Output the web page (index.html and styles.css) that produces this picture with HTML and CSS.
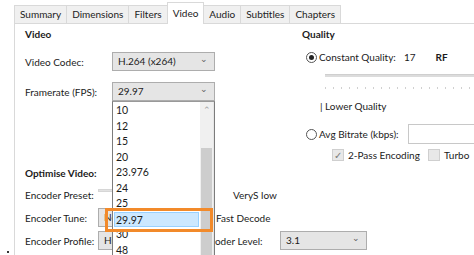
FILE: index.html
```html
<!DOCTYPE html>
<html>
    <head>
        <meta charset="utf-8" />
        <title>Video</title>
        <link rel="stylesheet" href="styles.css">
    </head>
    <body>
        <div class="tabs">
            <div class="tab">Summary</div>
            <div class="tab">Dimensions</div>
            <div class="tab">Filters</div>
            <div class="tab active">Video</div>
            <div class="tab">Audio</div>
            <div class="tab">Subtitles</div>
            <div class="tab">Chapters</div>
        </div>

        <div class="panel">
            <div class="leftcol">
                <div class="head">Video</div>
                <div class="row r-codec">
                    <span class="lbl">Video Codec:</span>
                    <div class="sel wide">H.264 (x264)<span class="arr">&#8964;</span></div>
                </div>
                <div class="row r-fps">
                    <span class="lbl">Framerate (FPS):</span>
                    <div class="sel wide">29.97<span class="arr">&#8964;</span></div>
                </div>

                <div class="head h-opt">Optimise Video:</div>
                <div class="row r-enc">
                    <span class="lbl2">Encoder Preset:</span>
                    <div class="pslider"></div>
                    <span class="preset">VeryS low</span>
                </div>
                <div class="row r-enc">
                    <span class="lbl2">Encoder Tune:</span>
                    <div class="sel mid">None<span class="arr">&#8964;</span></div>
                    <span class="fast">Fast Decode</span>
                </div>
                <div class="row r-enc">
                    <span class="lbl2">Encoder Profile:</span>
                    <div class="sel mid">High<span class="arr">&#8964;</span></div>
                    <span class="lvl">Encoder Level:</span>
                    <div class="sel lvlsel">3.1<span class="arr">&#8964;</span></div>
                </div>
            </div>

            <div class="rightcol">
                <div class="head">Quality</div>
                <div class="row r-cq">
                    <span class="radio on"></span>
                    <span class="cq">Constant Quality:</span>
                    <span class="num">17</span>
                    <span class="rf">RF</span>
                </div>
                <div class="track"></div>
                <div class="ticks"></div>
                <div class="lower">| Lower Quality</div>
                <div class="row r-ab">
                    <span class="radio"></span>
                    <span class="ab">Avg Bitrate (kbps):</span>
                    <div class="txt"></div>
                </div>
                <div class="row r-chk">
                    <span class="chk on">&#10003;</span>
                    <span class="chklbl">2-Pass Encoding</span>
                    <span class="chk"></span>
                    <span>Turbo</span>
                </div>
            </div>

            <div class="droplist">
                <div class="items">
                    <div class="item">10</div>
                    <div class="item">12</div>
                    <div class="item">15</div>
                    <div class="item">20</div>
                    <div class="item">23.976</div>
                    <div class="item">24</div>
                    <div class="item">25</div>
                    <div class="item picked">29.97</div>
                    <div class="item">30</div>
                    <div class="item">48</div>
                </div>
                <div class="scroll">
                    <span class="up">&#8963;</span>
                    <div class="thumb"></div>
                </div>
            </div>
            <div class="callout"></div>
        </div>
        <div class="mark"></div>
    </body>
</html>
```

FILE: styles.css
```css
*
{
    box-sizing: border-box;
}

body
{
    font: 10px Lato, "Noto Sans", sans-serif;
    color: #1b1b1b;
    background: #ffffff;
    margin: 0;
    width: 474px;
    height: 255px;
    overflow: hidden;
    position: relative;
}

/* tab strip */
.tabs
{
    display: flex;
    align-items: flex-end;
    height: 23px;
    padding-left: 14px;
}
.tab
{
    height: 18px;
    line-height: 16px;
    padding: 0 5px;
    background: #f0f0f0;
    border: 1px solid #d9d9d9;
    border-bottom: none;
    margin-right: -1px;
    color: #222;
}
.tab.active
{
    line-height: 20px;
    background: #ffffff;
    position: relative;
    z-index: 1;
    padding: 0 5px;
    margin-bottom: -1px;
    height: 22px;
}

.panel
{
    position: relative;
    margin-left: 14px;
    border-top: 1px solid #d9d9d9;
    border-left: 1px solid #d9d9d9;
    height: 232px;
    display: flex;
    padding-left: 10px;
}

.leftcol
{
    width: 277px;
    flex-shrink: 0;
    display: flex;
    flex-direction: column;
}
.rightcol
{
    flex: 1;
    display: flex;
    flex-direction: column;
}

.head
{
    font-weight: bold;
    line-height: 14px;
    margin-top: 3px;
}
.h-opt
{
    margin-top: 65px;
}

.row
{
    display: flex;
    align-items: center;
    white-space: nowrap;
}
.row > *
{
    flex-shrink: 0;
}
.r-codec
{
    margin-top: 11px;
    height: 19px;
}
.r-fps
{
    margin-top: 11px;
    height: 19px;
}
.r-enc
{
    margin-top: 4px;
    height: 19px;
}
.r-enc:nth-child(5)
{
    margin-top: 5px;
}

.lbl
{
    width: 87px;
}
.lbl2
{
    width: 73px;
}

.sel
{
    position: relative;
    height: 19px;
    line-height: 17px;
    padding-left: 5px;
    background: #e5e5e5;
    border: 1px solid #adadad;
}
.sel .arr
{
    position: absolute;
    right: 6px;
    top: -3px;
    font-size: 9px;
    color: #606060;
}
.wide
{
    width: 103px;
}
.mid
{
    width: 107px;
}
.lvl
{
    width: 81px;
    margin-left: -6px;
}
.lvlsel
{
    width: 87px;
}

.pslider
{
    width: 110px;
    height: 3px;
    background: #e2e2e2;
    border: 1px solid #d6d6d6;
    margin-top: -8px;
}
.preset
{
    margin-left: 25px;
}
.fast
{
    margin-left: 11px;
}

/* right column */
.r-cq
{
    margin-top: 9px;
    height: 14px;
}
.radio
{
    width: 11px;
    height: 11px;
    border: 1px solid #555;
    border-radius: 50%;
    margin: 0 2px 0 4px;
    position: relative;
    background: #fff;
}
.radio.on::after
{
    content: "";
    position: absolute;
    left: 2px;
    top: 2px;
    width: 5px;
    height: 5px;
    border-radius: 50%;
    background: #222;
}
.cq
{
    width: 85px;
}
.rf
{
    margin-left: 20px;
    font-weight: bold;
}
.track
{
    margin: 10px 0 0 23px;
    height: 3px;
    background: #dcdcdc;
    border-top: 1px solid #cfcfcf;
}
.ticks
{
    margin: 10px 0 0 23px;
    height: 2px;
    background: repeating-linear-gradient(to right, #d0d0d0 0 1px, transparent 1px 8px);
}
.lower
{
    margin: 10px 0 0 18px;
    line-height: 14px;
}
.r-ab
{
    margin-top: 11px;
    height: 20px;
}
.ab
{
    width: 89px;
}
.txt
{
    flex: 1;
    flex-shrink: 1;
    height: 20px;
    border: 1px solid #c8c8c8;
    border-right: none;
    background: #fff;
}
.r-chk
{
    margin-top: 3px;
    height: 16px;
    padding-left: 30px;
}
.chk
{
    width: 12px;
    height: 12px;
    border: 1px solid #cfcfcf;
    background: #e8e8e8;
    margin-right: 4px;
    font-size: 10px;
    line-height: 10px;
    text-align: center;
    color: #7a7a7a;
}
.chklbl
{
    width: 80px;
}

/* popup list for framerate */
.droplist
{
    position: absolute;
    left: 97px;
    top: 77px;
    width: 103px;
    height: 160px;
    background: #fff;
    border: 1px solid #7c7c7c;
    border-top-color: #999;
    border-bottom: none;
    display: flex;
    z-index: 2;
}
.items
{
    flex: 1;
    padding-top: 1px;
}
.item
{
    height: 15.5px;
    line-height: 15.5px;
    padding-left: 3px;
    font-size: 10.5px;
}
.item.picked
{
    background: #cce8ff;
    border: 1px solid #99d1ff;
    margin-left: 1px;
    padding-left: 1px;
    margin-right: 1px;
}
.scroll
{
    width: 14px;
    background: #f0f0f0;
    position: relative;
    border-right: 1px solid #e6e6e6;
}
.scroll .up
{
    display: block;
    text-align: center;
    font-size: 9px;
    color: #a0a0a0;
    height: 14px;
    line-height: 16px;
}
.thumb
{
    position: absolute;
    left: 1px;
    right: 1px;
    top: 46px;
    bottom: 0;
    background: #cdcdcd;
}
.callout
{
    position: absolute;
    left: 90px;
    top: 184px;
    width: 108px;
    height: 24px;
    border: 3px solid #f28a2a;
    z-index: 3;
}
.mark
{
    position: absolute;
    left: 7px;
    top: 251px;
    width: 2px;
    height: 2px;
    background: #333;
}
```
